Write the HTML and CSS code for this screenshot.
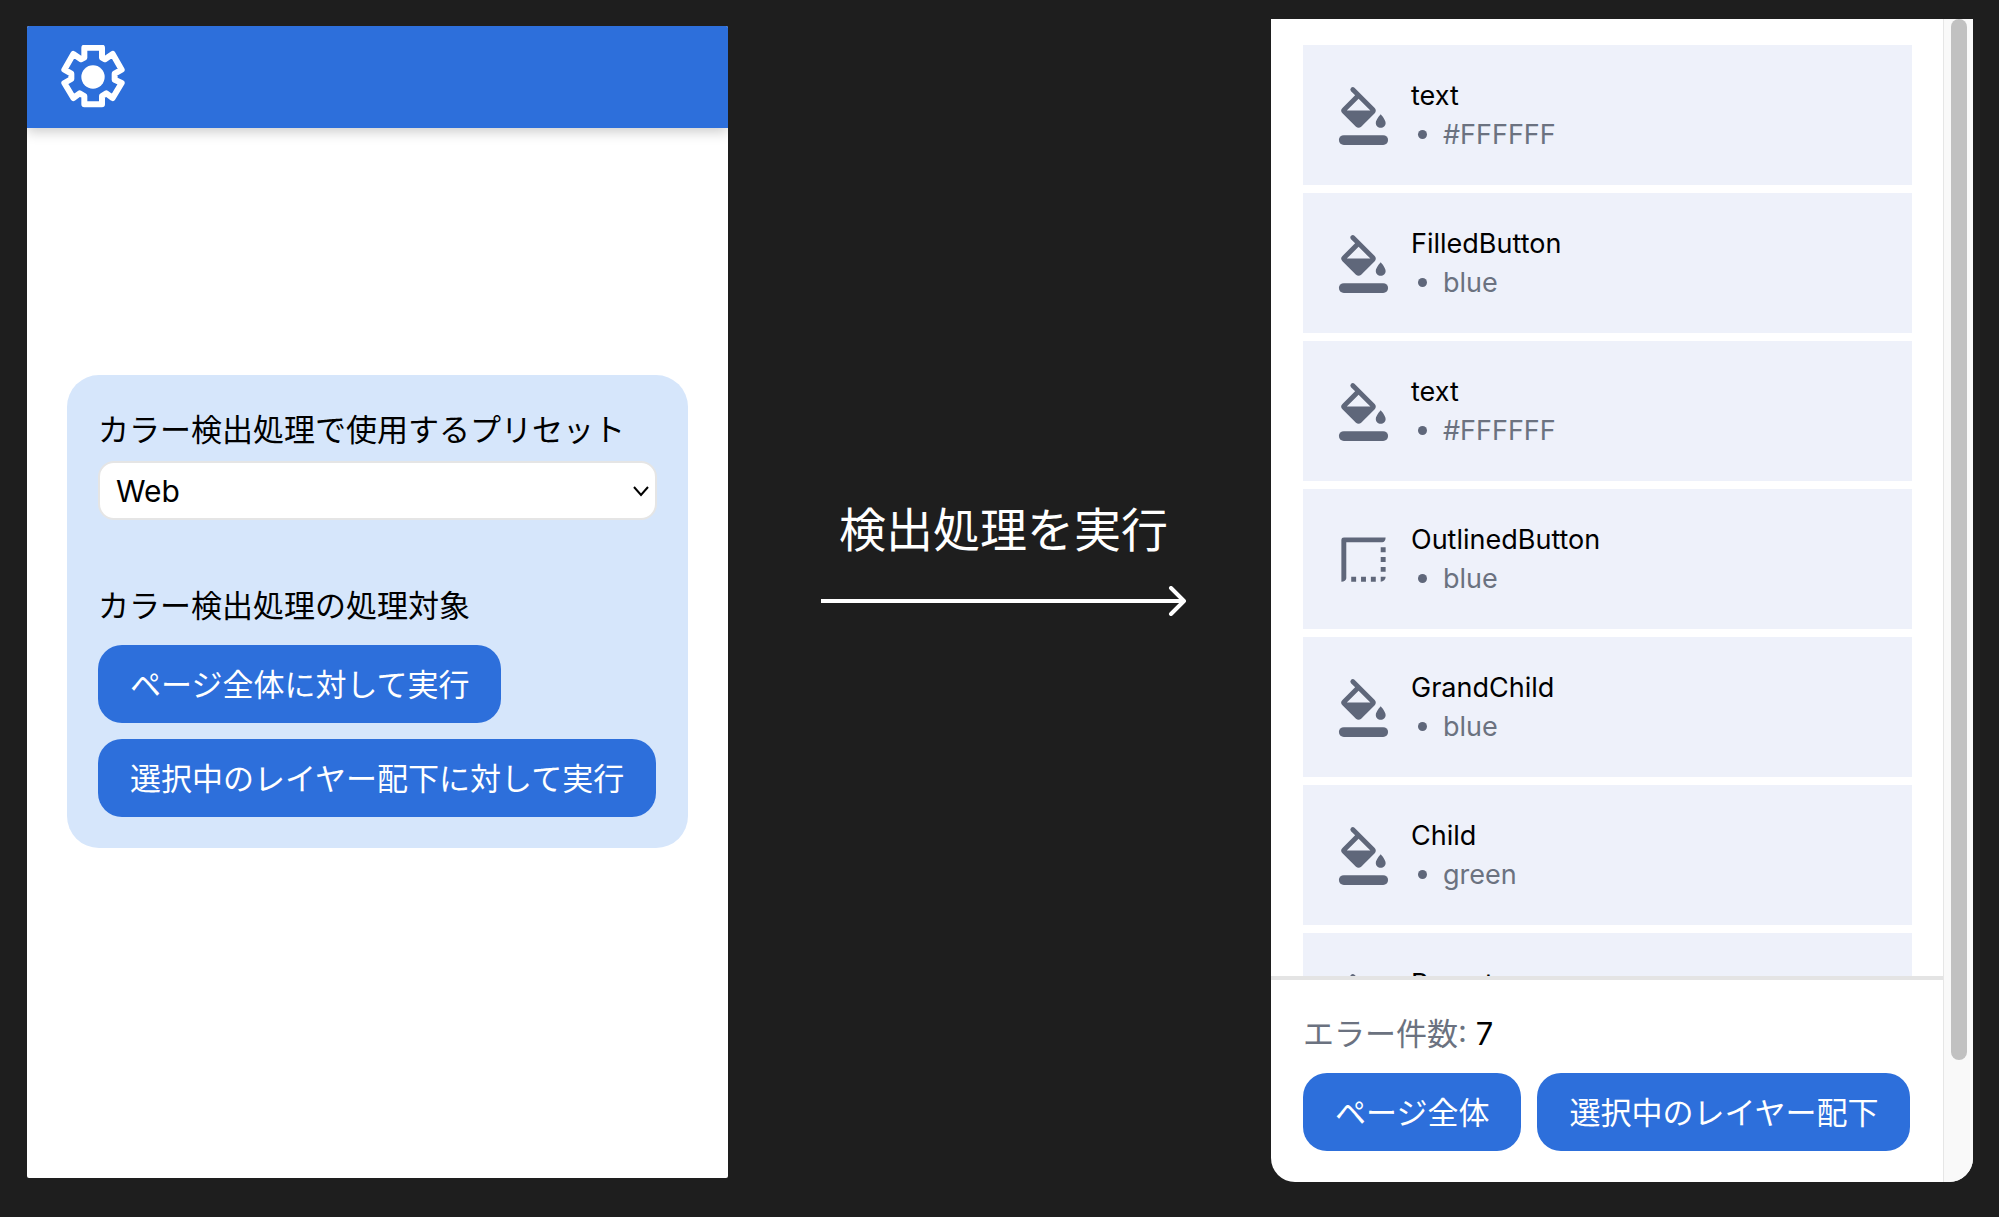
FILE: index.html
```html
<!DOCTYPE html>
<html lang="ja">
<head>
    <meta charset="UTF-8">
    <meta name="viewport" content="width=device-width, initial-scale=1.0">
    <title>カラー検出</title>
    <link rel="stylesheet" href="styles.css">
</head>
<body>
    <svg class="symbols" aria-hidden="true">
        <symbol id="icon-fill" viewBox="0 0 24 24">
            <path d="M16.56 8.94 8.32 .7a1 1 0 0 0-1.41 1.41l1.68 1.68-5.15 5.15a1.49 1.49 0 0 0 0 2.12l5.5 5.5c.29.29.68.44 1.06.44s.77-.15 1.06-.44l5.5-5.5c.59-.58.59-1.53 0-2.12zM5.21 10 10 5.21 14.79 10zM19 11.5s-2 2.17-2 3.5c0 1.1.9 2 2 2s2-.9 2-2c0-1.33-2-3.500-2-3.500z"/>
            <rect x="2" y="20" width="20" height="4" rx="2"/>
        </symbol>
        <symbol id="icon-border" viewBox="0 0 24 24">
            <path d="M4 3h17c0 1.100-.6 2-1.400 2H5v14.600c0 .8-.9 1.400-2 1.400V4a1 1 0 0 1 1-1z"/>
            <path d="M19 7h2v2h-2zM19 11h2v2h-2zM19 15h2v2h-2zM7 19h2v2H7zM11 19h2v2h-2zM15 19h2v2h-2zM19 19h2c0 1.100-.9 2-2 2z"/>
        </symbol>
    </svg>

    <div class="stage">
        <section class="panel panel-form">
            <header class="header">
                <button class="settings" type="button" aria-label="設定">
                    <svg viewBox="183 136 192 192">
                        <path d="M253 144H306V174L315 179 338 163 365 210 344 222V240L365 250 338 295 319 281 306 289V314H253V289L239 281 220 295 193 250 214 238V222L193 210 220 163 243 179 253 174Z"/>
                        <circle cx="279" cy="232" r="35"/>
                    </svg>
                </button>
            </header>
            <main class="form-area">
                <form class="card">
                    <label class="label" for="preset">カラー検出処理で使用するプリセット</label>
                    <div class="select">
                        <select id="preset">
                            <option>Web</option>
                        </select>
                        <svg viewBox="0 0 18 12"><path d="M2 2l7 8 7-8"/></svg>
                    </div>
                    <p class="label">カラー検出処理の処理対象</p>
                    <div class="actions">
                        <button class="button" type="button">ページ全体に対して実行</button>
                        <button class="button" type="button">選択中のレイヤー配下に対して実行</button>
                    </div>
                </form>
            </main>
        </section>

        <div class="step">
            <p>検出処理を実行</p>
            <svg viewBox="0 0 366 30">
                <path d="M0 15H361"/>
                <path class="head" d="M350 2l13 13-13 13"/>
            </svg>
        </div>

        <section class="panel panel-result">
            <div class="result">
                <ul class="list">
                    <li class="item">
                        <svg class="icon"><use href="#icon-fill"/></svg>
                        <div>
                            <p class="name">text</p>
                            <p class="color">#FFFFFF</p>
                        </div>
                    </li>
                    <li class="item">
                        <svg class="icon"><use href="#icon-fill"/></svg>
                        <div>
                            <p class="name">FilledButton</p>
                            <p class="color">blue</p>
                        </div>
                    </li>
                    <li class="item">
                        <svg class="icon"><use href="#icon-fill"/></svg>
                        <div>
                            <p class="name">text</p>
                            <p class="color">#FFFFFF</p>
                        </div>
                    </li>
                    <li class="item">
                        <svg class="icon"><use href="#icon-border"/></svg>
                        <div>
                            <p class="name">OutlinedButton</p>
                            <p class="color">blue</p>
                        </div>
                    </li>
                    <li class="item">
                        <svg class="icon"><use href="#icon-fill"/></svg>
                        <div>
                            <p class="name">GrandChild</p>
                            <p class="color">blue</p>
                        </div>
                    </li>
                    <li class="item">
                        <svg class="icon"><use href="#icon-fill"/></svg>
                        <div>
                            <p class="name">Child</p>
                            <p class="color">green</p>
                        </div>
                    </li>
                    <li class="item item-last">
                        <svg class="icon"><use href="#icon-fill"/></svg>
                        <div>
                            <p class="name">Parent</p>
                        </div>
                    </li>
                </ul>
                <footer class="footer">
                    <p class="count">エラー件数: <strong>7</strong></p>
                    <div class="footer-actions">
                        <button class="button" type="button">ページ全体</button>
                        <button class="button" type="button">選択中のレイヤー配下</button>
                    </div>
                </footer>
            </div>
            <div class="scrollbar"><div class="thumb"></div></div>
        </section>
    </div>
</body>
</html>
```
FILE: styles.css
```css
* {
    box-sizing: border-box;
}
body {
    margin: 0;
    background-color: #1e1e1e;
    color: #000;
    font-family: Inter, "Noto Sans CJK JP", sans-serif;
    font-size: 31px;
}
p, ul {
    margin: 0;
    padding: 0;
}
button, select {
    font: inherit;
    border: 0;
}
svg {
    display: block;
}
.symbols {
    position: absolute;
    width: 0;
    height: 0;
}
.stage {
    display: grid;
    grid-template-columns: 701fr 543fr 702fr;
    height: 100vh;
    padding: 19px 26px 35px 27px;
}
.panel {
    background-color: #fff;
    overflow: hidden;
}

/* Form */
.panel-form {
    display: flex;
    flex-direction: column;
    margin: 7px 0 4px;
    border-radius: 2px;
}
.header {
    padding: 19px 34px;
    background-color: #2d6fdb;
    box-shadow: 0 4px 12px rgba(0, 0, 0, 0.2);
}
.settings {
    display: block;
    padding: 0;
    background: none;
    cursor: pointer;
}
.settings svg {
    width: 64px;
    height: 64px;
    fill: #fff;
}
.settings path {
    fill: none;
    stroke: #fff;
    stroke-width: 18;
    stroke-linejoin: round;
}
.form-area {
    flex-grow: 1;
    display: flex;
    flex-direction: column;
    justify-content: center;
    padding: 0 40px 83px;
}
.card {
    padding: 31px;
    border-radius: 32px;
    background-color: #d6e6fb;
}
.label {
    display: block;
    line-height: 47px;
}
.select {
    display: grid;
    align-items: center;
    margin: 8px 0 62px;
}
.select select {
    grid-area: 1 / 1;
    width: 100%;
    height: 59px;
    padding: 0 16px;
    border: 2px solid #e5e5e5;
    border-radius: 16px;
    background-color: #fff;
    color: #000;
    font-size: 30px;
    appearance: none;
}
.select svg {
    grid-area: 1 / 1;
    justify-self: end;
    width: 18px;
    height: 12px;
    margin-right: 7px;
    fill: none;
    stroke: #000;
    stroke-width: 2;
    pointer-events: none;
}
.actions {
    display: flex;
    flex-direction: column;
    align-items: flex-start;
    gap: 16px;
    margin-top: 16px;
}
.button {
    height: 78px;
    padding: 0 32px 4px;
    border-radius: 24px;
    background-color: #2d6fdb;
    color: #fff;
    white-space: nowrap;
    cursor: pointer;
}

/* Arrow */
.step {
    display: flex;
    flex-direction: column;
    align-items: center;
    justify-content: center;
    gap: 26px;
    padding: 0 0 85px 8px;
    color: #fff;
    font-size: 47px;
    line-height: 60px;
}
.step svg {
    width: 366px;
    height: 30px;
    fill: none;
    stroke: #fff;
    stroke-width: 4;
}
.step .head {
    stroke-linecap: round;
    stroke-linejoin: round;
}

/* Result */
.panel-result {
    display: flex;
    border-radius: 0 0 24px 24px;
}
.result {
    flex: 1;
    min-width: 0;
    display: flex;
    flex-direction: column;
}
.list {
    flex: 1;
    min-height: 0;
    overflow: hidden;
    display: flex;
    flex-direction: column;
    gap: 8px;
    padding: 26px 31px 0 32px;
    list-style: none;
}
.item {
    flex: none;
    display: flex;
    align-items: center;
    gap: 18px;
    height: 140px;
    padding: 0 31px;
    background-color: #eef1fa;
    font-size: 27px;
    line-height: 39px;
}
.item-last {
    align-items: flex-start;
    padding-top: 31px;
}
.icon {
    width: 59px;
    height: 59px;
    fill: #5f677a;
}
.item-last .icon {
    margin-top: 9px;
}
.color {
    display: flex;
    align-items: center;
    gap: 16px;
    padding-left: 7px;
    color: #6b7280;
}
.color::before {
    content: "";
    width: 9px;
    height: 9px;
    border-radius: 50%;
    background-color: #5f677a;
}
.footer {
    padding: 30px 32px 31px;
    border-top: 4px solid #e4e4e4;
}
.count {
    color: #6b7280;
    line-height: 47px;
}
.count strong {
    color: #000;
    font-weight: 400;
}
.footer-actions {
    display: flex;
    gap: 16px;
    margin-top: 16px;
}
.scrollbar {
    width: 30px;
    padding: 0 6px 0 7px;
    border-left: 1px solid #e6e6e6;
    background-color: #f9f9f9;
}
.thumb {
    height: calc(100% - 122px);
    border-radius: 8px;
    background-color: #c1c1c1;
}
```
